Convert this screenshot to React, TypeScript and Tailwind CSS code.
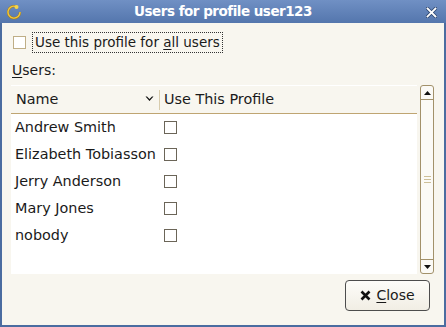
import React from 'react';

const users = ['Andrew Smith', 'Elizabeth Tobiasson', 'Jerry Anderson', 'Mary Jones', 'nobody'];

const Box = ({ tone = 'dark' }: { tone?: 'dark' | 'light' }) => (
  <span
    className={
      'block w-[13px] h-[13px] bg-white border ' +
      (tone === 'dark' ? 'border-[#6b6558]' : 'border-[#bfae86]')
    }
  />
);

const App = () => {
  return (
    <div
      className="w-[446px] h-[327px] bg-[#4b6ca0] flex flex-col overflow-hidden text-[#1a1a1a]"
      style={{ fontFamily: '"DejaVu Sans", sans-serif' }}
    >
      {/* title bar */}
      <div className="relative h-[23px] shrink-0 bg-gradient-to-b from-[#7090c4] to-[#5476ad] flex items-center justify-center">
        <svg className="absolute left-[7px] top-[4px]" width="15" height="16" viewBox="0 0 15 16">
          <path d="M9 2.5 A6 6 0 1 0 13 8" fill="none" stroke="#9a7a2c" strokeWidth="2.4" />
          <path d="M9 2.5 A6 6 0 1 0 13 8" fill="none" stroke="#f2c83a" strokeWidth="1.4" />
          <circle cx="9.5" cy="3" r="2" fill="#f6d54a" />
        </svg>
        <span className="text-white font-bold text-[13.5px] tracking-[-0.5px] leading-none">
          Users for profile user123
        </span>
        <svg className="absolute right-[9px] top-[7px]" width="11" height="11" viewBox="0 0 11 11">
          <path d="M1.5 1.5 L9.5 9.5 M9.5 1.5 L1.5 9.5" stroke="#2f4770" strokeWidth="3.4" strokeLinecap="square" />
          <path d="M1.5 1.5 L9.5 9.5 M9.5 1.5 L1.5 9.5" stroke="#ffffff" strokeWidth="1.8" strokeLinecap="square" />
        </svg>
      </div>

      {/* body */}
      <div className="flex-1 mx-[2px] mb-[2px] bg-[#f8f6ef] flex flex-col pl-[9px] pr-[10px] text-[14px]">
        <div className="flex items-center h-[21px] mt-[9px] ml-[2px] text-[13.5px]">
          <Box tone="light" />
          <span className="ml-[6px] px-[2px] h-[21px] flex items-center border border-dotted border-[#333]">
            <span>
              Use this profile for <span className="underline underline-offset-2">a</span>ll users
            </span>
          </span>
        </div>

        <div className="mt-[10px] ml-[1px] leading-none">
          <span className="underline underline-offset-2">U</span>sers:
        </div>

        <div className="mt-[8px] flex h-[189px]">
          <div className="flex-1 flex flex-col bg-white text-[14.4px]">
            <div className="h-[29px] shrink-0 bg-[#f8f6ef] border-t border-white border-b border-b-[#bfa572] flex items-center">
              <div className="w-[148px] flex items-center pl-[5px] pr-[5px]">
                <span className="flex-1">Name</span>
                <svg width="9" height="6" viewBox="0 0 9 6">
                  <path d="M0.5 0.5 L4.5 5 L8.5 0.5 L7 0.5 L4.5 3 L2 0.5 Z" fill="#111" />
                </svg>
              </div>
              <div className="h-[20px] w-px bg-[#d8ccad]" />
              <span className="pl-[4px]">Use This Profile</span>
            </div>
            {users.map((u) => (
              <div key={u} className="h-[27px] flex items-center">
                <span className="w-[153px] pl-[4px]">{u}</span>
                <Box />
              </div>
            ))}
          </div>

          {/* scrollbar */}
          <div className="ml-[3px] w-[14px] border border-[#a2916a] rounded-[3px] bg-[#fbfaf6] flex flex-col">
            <div className="h-[14px] border-b border-[#a2916a] flex items-center justify-center">
              <svg width="7" height="4" viewBox="0 0 7 4">
                <path d="M0 4 L3.5 0 L7 4 Z" fill="#111" />
              </svg>
            </div>
            <div className="flex-1 flex flex-col items-center justify-center gap-[2px]">
              <span className="block w-[7px] h-px bg-[#cdbf98]" />
              <span className="block w-[7px] h-px bg-[#cdbf98]" />
              <span className="block w-[7px] h-px bg-[#cdbf98]" />
            </div>
            <div className="h-[14px] border-t border-[#a2916a] flex items-center justify-center">
              <svg width="7" height="4" viewBox="0 0 7 4">
                <path d="M0 0 L3.5 4 L7 0 Z" fill="#111" />
              </svg>
            </div>
          </div>
        </div>

        <div className="flex justify-end mt-[6px]">
          <button className="w-[85px] h-[31px] mr-[4px] border border-[#4d4d4d] rounded-[4px] bg-gradient-to-b from-[#fdfcf9] to-[#f1eee4] flex items-center justify-center gap-[5px]">
            <svg width="11" height="11" viewBox="0 0 11 11">
              <path d="M1.5 1.5 L9.5 9.5 M9.5 1.5 L1.5 9.5" stroke="#111" strokeWidth="2.6" />
            </svg>
            <span>
              <span className="underline underline-offset-2">C</span>lose
            </span>
          </button>
        </div>
      </div>
    </div>
  );
};

export default App;
